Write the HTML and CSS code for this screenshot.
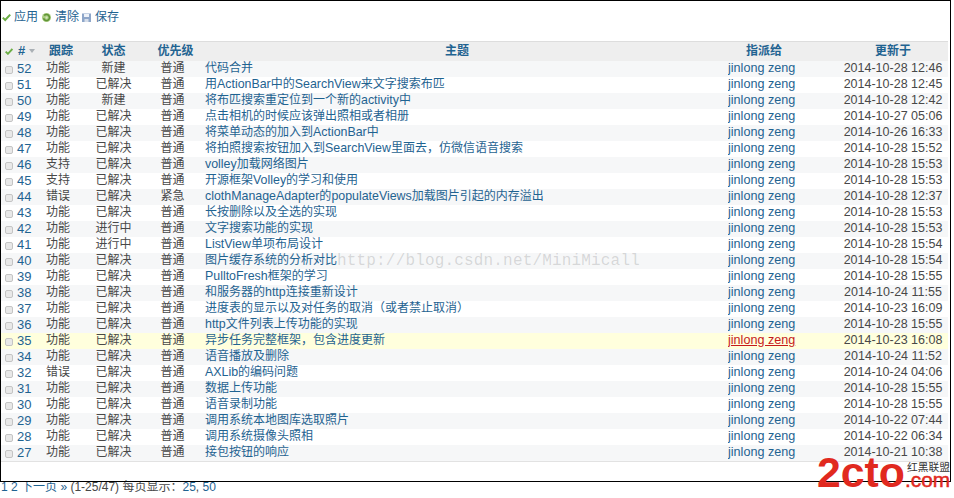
FILE: index.html
```html
<!DOCTYPE html>
<html lang="zh-CN">
<head>
<meta charset="utf-8">
<title>问题列表</title>
<link rel="stylesheet" href="styles.css">
</head>
<body>
<div class="frame">
  <div class="toolbar">
    <a class="tool"><svg class="ico" viewBox="0 0 9 9"><path d="M.8 4.6 3.2 7 8.2 1.6" fill="none" stroke="#6cae45" stroke-width="2"/></svg>应用</a>
    <a class="tool t-clear"><svg class="ico" viewBox="0 0 9 9"><circle cx="4.5" cy="4.5" r="4.5" fill="#a9cc80"/><path d="M2.2 2.6A3 3 0 1 1 1.6 5.2" fill="none" stroke="#5f9435" stroke-width="1.6"/><circle cx="4.6" cy="4.6" r="1.1" fill="#d7e6c2"/></svg>清除</a>
    <a class="tool t-save"><svg class="ico" viewBox="0 0 9 9"><rect x="0" y=".5" width="9" height="8.5" fill="#8ea6c9"/><rect x="2" y="1" width="5" height="3" fill="#eef2f8"/><rect x="2.5" y="6" width="4" height="3" fill="#d6deea"/></svg>保存</a>
  </div>
  <table class="issues">
    <colgroup>
      <col class="c-id"><col class="c-tr"><col class="c-st"><col class="c-pr"><col class="c-su"><col class="c-as"><col class="c-up">
    </colgroup>
    <thead>
      <tr>
        <th class="h-id"><svg class="hck" viewBox="0 0 8 7"><path d="M.6 3.6 2.9 5.8 7.4 1" fill="none" stroke="#6cae45" stroke-width="1.9"/></svg><span class="hash">#</span><svg class="sort" viewBox="0 0 6 4"><path d="M0 0H6L3 4Z" fill="#aab0b5"/></svg></th>
        <th class="h-tr">跟踪</th><th>状态</th><th class="h-pr">优先级</th><th class="h-su">主题</th><th class="h-as">指派给</th><th>更新于</th>
      </tr>
    </thead>
    <tbody>
      <tr><td class="id"><i class="cb"></i><a>52</a></td><td class="tr">功能</td><td class="ce">新建</td><td class="ce">普通</td><td class="su"><a>代码合并</a></td><td class="as"><a>jinlong zeng</a></td><td class="up">2014-10-28 12:46</td></tr>
      <tr><td class="id"><i class="cb"></i><a>51</a></td><td class="tr">功能</td><td class="ce">已解决</td><td class="ce">普通</td><td class="su"><a>用<span class="la">ActionBar</span>中的<span class="la">SearchView</span>来文字搜索布匹</a></td><td class="as"><a>jinlong zeng</a></td><td class="up">2014-10-28 12:45</td></tr>
      <tr><td class="id"><i class="cb"></i><a>50</a></td><td class="tr">功能</td><td class="ce">新建</td><td class="ce">普通</td><td class="su"><a>将布匹搜索重定位到一个新的<span class="la">activity</span>中</a></td><td class="as"><a>jinlong zeng</a></td><td class="up">2014-10-28 12:42</td></tr>
      <tr><td class="id"><i class="cb"></i><a>49</a></td><td class="tr">功能</td><td class="ce">已解决</td><td class="ce">普通</td><td class="su"><a>点击相机的时候应该弹出照相或者相册</a></td><td class="as"><a>jinlong zeng</a></td><td class="up">2014-10-27 05:06</td></tr>
      <tr><td class="id"><i class="cb"></i><a>48</a></td><td class="tr">功能</td><td class="ce">已解决</td><td class="ce">普通</td><td class="su"><a>将菜单动态的加入到<span class="la">ActionBar</span>中</a></td><td class="as"><a>jinlong zeng</a></td><td class="up">2014-10-26 16:33</td></tr>
      <tr><td class="id"><i class="cb"></i><a>47</a></td><td class="tr">功能</td><td class="ce">已解决</td><td class="ce">普通</td><td class="su"><a>将拍照搜索按钮加入到<span class="la">SearchView</span>里面去，仿微信语音搜索</a></td><td class="as"><a>jinlong zeng</a></td><td class="up">2014-10-28 15:52</td></tr>
      <tr><td class="id"><i class="cb"></i><a>46</a></td><td class="tr">支持</td><td class="ce">已解决</td><td class="ce">普通</td><td class="su"><a><span class="la">volley</span>加载网络图片</a></td><td class="as"><a>jinlong zeng</a></td><td class="up">2014-10-28 15:53</td></tr>
      <tr><td class="id"><i class="cb"></i><a>45</a></td><td class="tr">支持</td><td class="ce">已解决</td><td class="ce">普通</td><td class="su"><a>开源框架<span class="la">Volley</span>的学习和使用</a></td><td class="as"><a>jinlong zeng</a></td><td class="up">2014-10-28 15:53</td></tr>
      <tr><td class="id"><i class="cb"></i><a>44</a></td><td class="tr">错误</td><td class="ce">已解决</td><td class="ce">紧急</td><td class="su"><a><span class="la">clothManageAdapter</span>的<span class="la">populateViews</span>加载图片引起的内存溢出</a></td><td class="as"><a>jinlong zeng</a></td><td class="up">2014-10-28 12:37</td></tr>
      <tr><td class="id"><i class="cb"></i><a>43</a></td><td class="tr">功能</td><td class="ce">已解决</td><td class="ce">普通</td><td class="su"><a>长按删除以及全选的实现</a></td><td class="as"><a>jinlong zeng</a></td><td class="up">2014-10-28 15:53</td></tr>
      <tr><td class="id"><i class="cb"></i><a>42</a></td><td class="tr">功能</td><td class="ce">进行中</td><td class="ce">普通</td><td class="su"><a>文字搜索功能的实现</a></td><td class="as"><a>jinlong zeng</a></td><td class="up">2014-10-28 15:53</td></tr>
      <tr><td class="id"><i class="cb"></i><a>41</a></td><td class="tr">功能</td><td class="ce">进行中</td><td class="ce">普通</td><td class="su"><a><span class="la">ListView</span>单项布局设计</a></td><td class="as"><a>jinlong zeng</a></td><td class="up">2014-10-28 15:54</td></tr>
      <tr><td class="id"><i class="cb"></i><a>40</a></td><td class="tr">功能</td><td class="ce">已解决</td><td class="ce">普通</td><td class="su"><a>图片缓存系统的分析对比</a></td><td class="as"><a>jinlong zeng</a></td><td class="up">2014-10-28 15:54</td></tr>
      <tr><td class="id"><i class="cb"></i><a>39</a></td><td class="tr">功能</td><td class="ce">已解决</td><td class="ce">普通</td><td class="su"><a><span class="la">PulltoFresh</span>框架的学习</a></td><td class="as"><a>jinlong zeng</a></td><td class="up">2014-10-28 15:55</td></tr>
      <tr><td class="id"><i class="cb"></i><a>38</a></td><td class="tr">功能</td><td class="ce">已解决</td><td class="ce">普通</td><td class="su"><a>和服务器的<span class="la">http</span>连接重新设计</a></td><td class="as"><a>jinlong zeng</a></td><td class="up">2014-10-24 11:55</td></tr>
      <tr><td class="id"><i class="cb"></i><a>37</a></td><td class="tr">功能</td><td class="ce">已解决</td><td class="ce">普通</td><td class="su"><a>进度表的显示以及对任务的取消<span class="pa">（</span>或者禁止取消<span class="pa">）</span></a></td><td class="as"><a>jinlong zeng</a></td><td class="up">2014-10-23 16:09</td></tr>
      <tr><td class="id"><i class="cb"></i><a>36</a></td><td class="tr">功能</td><td class="ce">已解决</td><td class="ce">普通</td><td class="su"><a><span class="la">http</span>文件列表上传功能的实现</a></td><td class="as"><a>jinlong zeng</a></td><td class="up">2014-10-28 15:55</td></tr>
      <tr class="hl"><td class="id"><i class="cb"></i><a>35</a></td><td class="tr">功能</td><td class="ce">已解决</td><td class="ce">普通</td><td class="su"><a>异步任务完整框架，包含进度更新</a></td><td class="as"><a class="late">jinlong zeng</a></td><td class="up">2014-10-23 16:08</td></tr>
      <tr><td class="id"><i class="cb"></i><a>34</a></td><td class="tr">功能</td><td class="ce">已解决</td><td class="ce">普通</td><td class="su"><a>语音播放及删除</a></td><td class="as"><a>jinlong zeng</a></td><td class="up">2014-10-24 11:52</td></tr>
      <tr><td class="id"><i class="cb"></i><a>32</a></td><td class="tr">错误</td><td class="ce">已解决</td><td class="ce">普通</td><td class="su"><a><span class="la">AXLib</span>的编码问题</a></td><td class="as"><a>jinlong zeng</a></td><td class="up">2014-10-24 04:06</td></tr>
      <tr><td class="id"><i class="cb"></i><a>31</a></td><td class="tr">功能</td><td class="ce">已解决</td><td class="ce">普通</td><td class="su"><a>数据上传功能</a></td><td class="as"><a>jinlong zeng</a></td><td class="up">2014-10-28 15:55</td></tr>
      <tr><td class="id"><i class="cb"></i><a>30</a></td><td class="tr">功能</td><td class="ce">已解决</td><td class="ce">普通</td><td class="su"><a>语音录制功能</a></td><td class="as"><a>jinlong zeng</a></td><td class="up">2014-10-28 15:55</td></tr>
      <tr><td class="id"><i class="cb"></i><a>29</a></td><td class="tr">功能</td><td class="ce">已解决</td><td class="ce">普通</td><td class="su"><a>调用系统本地图库选取照片</a></td><td class="as"><a>jinlong zeng</a></td><td class="up">2014-10-22 07:44</td></tr>
      <tr><td class="id"><i class="cb"></i><a>28</a></td><td class="tr">功能</td><td class="ce">已解决</td><td class="ce">普通</td><td class="su"><a>调用系统摄像头照相</a></td><td class="as"><a>jinlong zeng</a></td><td class="up">2014-10-22 06:34</td></tr>
      <tr><td class="id"><i class="cb"></i><a>27</a></td><td class="tr">功能</td><td class="ce">已解决</td><td class="ce">普通</td><td class="su"><a>接包按钮的响应</a></td><td class="as"><a>jinlong zeng</a></td><td class="up">2014-10-21 10:38</td></tr>
    </tbody>
  </table>
</div>
<div class="pager"><a>1</a> <a>2</a> <a>下一页 »</a> (1-25/47) 每页显示：<a>25</a>, <a>50</a></div>
<div class="watermark">http://blog.csdn.net/MiniMicall</div>
<div class="logo">
  <svg class="logo-art" viewBox="0 0 137 42" width="137" height="42">
    <text class="l-big" x="0" y="35" textLength="88" lengthAdjust="spacingAndGlyphs">2cto</text>
    <text class="l-dot" x="88" y="35" textLength="45" lengthAdjust="spacingAndGlyphs">.com</text>
    <text class="l-cn" x="90" y="19" textLength="43" lengthAdjust="spacingAndGlyphs">红黑联盟</text>
  </svg>
</div>
</body>
</html>
```
FILE: styles.css
```css
* { box-sizing: border-box; }
html, body { margin: 0; padding: 0; height: 498px; overflow: hidden; background: #fff; }
body {
  position: relative;
  width: 954px;
  font-family: "Liberation Sans", "Noto Sans CJK SC", sans-serif;
  font-size: 12px;
  color: #484848;
}
a { color: #1f6391; text-decoration: none; }
.frame {
  position: relative;
  z-index: 1;
  width: 951px;
  height: 482px;
  border: 1px solid #000;
  overflow: hidden;
}
.toolbar {
  height: 40px;
  padding: 8px 0 0 1px;
  display: flex;
  align-items: flex-start;
  line-height: 16px;
  font-size: 12px;
}
.tool { display: inline-flex; align-items: center; }
.t-clear { margin-left: 4px; }
.t-save { margin-left: 3px; }
.ico { width: 9px; height: 9px; margin-right: 4px; flex: none; margin-top: 1px; }
.tool:first-child .ico { margin-right: 3px; }
.issues { border-collapse: collapse; table-layout: fixed; width: 947px; }
.c-id { width: 38px; } .c-tr { width: 39px; } .c-st { width: 71px; } .c-pr { width: 47px; }
.c-su { width: 532px; } .c-as { width: 110px; } .c-up { width: 110px; }
.issues th {
  height: 19px; padding: 0;
  background: #eeeeee;
  border-top: 1px solid #dddddd;
  color: #1f6391;
  font-size: 12px; font-weight: bold; line-height: 16px; text-align: center;
}
.issues .h-id { text-align: left; white-space: nowrap; padding-left: 4px; }
.issues .h-tr { padding-left: 5px; }
.issues .h-pr { padding-left: 6px; }
.issues .h-su { padding-right: 10px; }
.issues .h-as { padding-right: 38px; }
.hck { width: 8px; height: 7px; vertical-align: 0; }
.hash { margin-left: 5px; font-size: 13px; }
.sort { width: 6px; height: 4px; margin-left: 4px; vertical-align: 2px; }
.issues td { height: 16px; padding: 0 0 1px; line-height: 15px; white-space: nowrap; overflow: hidden; }
.issues tbody tr:nth-child(odd) { background: #f6f7f8; }
.issues tbody tr:nth-child(even) { background: #fff; }
.issues tbody tr.hl { background: #ffffdd; }
.issues tbody tr:last-child td { border-bottom: 1px solid #e2e2e2; }
.issues .id { padding-left: 4px; font-size: 13px; }
.cb {
  display: inline-block; width: 8px; height: 8px; margin-right: 4px; vertical-align: -1px;
  border: 1px solid #c4c4c4; border-radius: 2px; background: #e8e8e8;
}
.issues .tr { padding-left: 7px; }
.ce { text-align: center; }
.issues .su { padding-left: 9px; }
.la { font-size: 12.4px; }
.pa { display: inline-block; width: 12px; text-align: center; }
.as { font-size: 12.6px; }
.up { text-align: center; font-size: 12.5px; }
.late { color: #c61a1a; text-decoration: underline; }
.pager { position: absolute; left: 1px; top: 480px; line-height: 14px; font-size: 12px; white-space: nowrap; }
.watermark {
  position: absolute; z-index: 2; left: 337px; top: 251px; line-height: 20px;
  font-family: "Liberation Mono", monospace; font-size: 16px; letter-spacing: 0.17px;
  color: rgba(120,120,120,0.26); white-space: nowrap; pointer-events: none;
}
.logo { position: absolute; z-index: 3; left: 817px; top: 452px; width: 137px; height: 42px; }
.logo-art { display: block; }
.l-big { font-family: "Liberation Sans", sans-serif; font-weight: bold; font-size: 42px; fill: #e1291f; }
.l-dot { font-family: "Liberation Sans", sans-serif; font-size: 21px; fill: #e1291f; stroke: #e1291f; stroke-width: .5px; }
.l-cn { font-family: "Noto Sans CJK SC", sans-serif; font-size: 10.5px; fill: #333; }
```
